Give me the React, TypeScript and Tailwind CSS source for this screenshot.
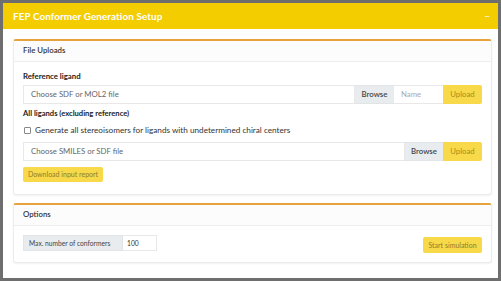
export default function App() {
  const font = { fontFamily: 'Lato, "Liberation Sans", sans-serif' };
  return (
    <div style={font} className="w-[501px] h-[281px] overflow-hidden bg-white border-[3px] border-[#6e6e6e]">
      {/* Title bar */}
      <div className="h-[26px] bg-[#f3cd00] flex items-center justify-between pl-[10px] pr-[8px] text-white">
        <span className="text-[9.9px] font-bold tracking-[0.1px]">FEP Conformer Generation Setup</span>
        <span className="text-[10px] leading-none">−</span>
      </div>

      <div className="pl-[10px] pr-[6px] pt-[10px]">
        {/* File uploads card */}
        <div className="border border-[#ececec] border-t-2 border-t-[#e6a23c] rounded-[3px] shadow-[0_1px_2px_rgba(0,0,0,0.06)]">
          <div className="h-[21px] flex items-center px-[9px] border-b border-[#eeeeee] bg-[#fcfcfc] text-[7.8px] font-semibold text-[#333]">
            File Uploads
          </div>
          <div className="px-[9px] pt-[10px] pb-[12px]">
            <div className="h-[10px] flex items-center text-[7.8px] font-bold text-[#222] mb-[3px]">Reference ligand</div>
            <div className="flex h-[19px] text-[7.8px]">
              <div className="flex-1 flex items-center pl-[7px] border border-[#e8e8e8] text-[#666]">Choose SDF or MOL2 file</div>
              <div className="w-[39px] flex items-center justify-center bg-[#e9ecef] border-y border-[#e2e5e8] font-semibold text-[#444]">Browse</div>
              <div className="w-[49px] flex items-center pl-[7px] border-y border-[#e8e8e8] text-[#aaa]">Name</div>
              <div className="w-[39px] flex items-center justify-center bg-[#f7d94a] rounded-r-[2px] text-[#a88f1a]">Upload</div>
            </div>
            <div className="h-[10px] mt-[5px] flex items-center text-[7.6px] font-bold text-[#222]">All ligands (excluding reference)</div>
            <div className="h-[12px] mt-[5px] flex items-center gap-[4px] pl-[1px] text-[8.2px] text-[#333]">
              <span className="w-[7px] h-[7px] border border-[#888] rounded-[1px] bg-white" />
              <span>Generate all stereoisomers for ligands with undetermined chiral centers</span>
            </div>
            <div className="flex h-[19px] mt-[6px] text-[7.8px]">
              <div className="flex-1 flex items-center pl-[7px] border border-[#e8e8e8] text-[#666]">Choose SMILES or SDF file</div>
              <div className="w-[38px] flex items-center justify-center bg-[#e9ecef] border-y border-[#e2e5e8] font-semibold text-[#444]">Browse</div>
              <div className="w-[39px] flex items-center justify-center bg-[#f7d94a] rounded-r-[2px] text-[#a88f1a]">Upload</div>
            </div>
            <button className="mt-[6px] h-[15px] w-[80px] flex items-center justify-center bg-[#f7d94a] rounded-[2px] text-[7px] text-[#8f7d2a]">
              Download input report
            </button>
          </div>
        </div>

        {/* Options card */}
        <div className="mt-[8px] border border-[#ececec] border-t-2 border-t-[#e6a23c] rounded-[3px] shadow-[0_1px_2px_rgba(0,0,0,0.06)]">
          <div className="h-[21px] flex items-center px-[9px] border-b border-[#eeeeee] bg-[#fcfcfc] text-[7.8px] font-semibold text-[#333]">
            Options
          </div>
          <div className="px-[9px] pt-[9px] pb-[9px] flex items-start justify-between">
            <div className="flex h-[16px] text-[6.7px]">
              <div className="w-[100px] flex items-center pl-[5px] bg-[#e9ecef] border border-[#e2e5e8] text-[#444]">Max. number of conformers</div>
              <div className="w-[34px] flex items-center pl-[4px] border-y border-r border-[#e8e8e8] text-[#333]">100</div>
            </div>
            <button className="mt-[2px] h-[16px] w-[59px] flex items-center justify-center bg-[#f7d94a] rounded-[2px] text-[7px] text-[#8f7d2a]">
              Start simulation
            </button>
          </div>
        </div>
      </div>
    </div>
  );
}
